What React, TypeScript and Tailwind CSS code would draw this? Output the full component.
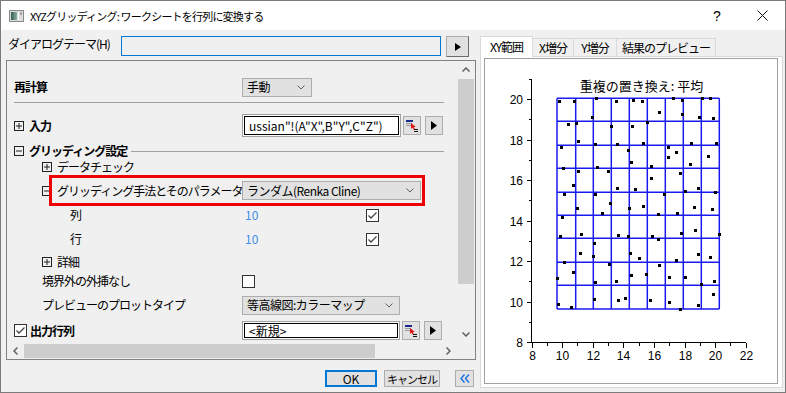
import React from "react";

const Chevron = () => (
  <svg width="8" height="5" viewBox="0 0 8 5" className="shrink-0">
    <polyline points="0.5,0.5 4,4 7.5,0.5" fill="none" stroke="#606060" strokeWidth="1" />
  </svg>
);

function Dropdown({ cls, text }: { cls: string; text: string }) {
  return (
    <div className={`${cls} h-[19px] border border-[#adadad] bg-[#e1e1e1] flex items-center pl-[4px] pr-[6px]`}>
      <span className="flex-1 whitespace-nowrap tracking-[-0.5px]">{text}</span>
      <Chevron />
    </div>
  );
}

function ExpandBox({ minus }: { minus?: boolean }) {
  return (
    <svg width="10" height="10" viewBox="0 0 10 10" className="shrink-0">
      <rect x="0.5" y="0.5" width="9" height="9" fill="none" stroke="#222" />
      <line x1="2" y1="5" x2="8" y2="5" stroke="#222" />
      {!minus && <line x1="5" y1="2" x2="5" y2="8" stroke="#222" />}
    </svg>
  );
}

function CheckBox({ checked }: { checked?: boolean }) {
  return (
    <div className="w-[13px] h-[13px] border border-[#333] bg-white shrink-0 flex items-center justify-center">
      {checked && (
        <svg width="11" height="11" viewBox="0 0 11 11">
          <polyline points="1.5,5.5 4,8 9.5,2.5" fill="none" stroke="#444" strokeWidth="1.3" />
        </svg>
      )}
    </div>
  );
}

function InputBox({ cls, text }: { cls: string; text: string }) {
  return (
    <div className={`${cls} border border-[#a0a0a0] bg-white p-px shrink-0`}>
      <div className="w-full h-full border border-black flex items-center pl-[4px] whitespace-nowrap tracking-normal text-[12px] leading-[12px]">
        {text}
      </div>
    </div>
  );
}

function PickBtn() {
  return (
    <div className="w-[18px] h-[19px] ml-[2px] border border-[#adadad] bg-[#e1e1e1] flex items-center justify-center shrink-0">
      <svg width="14" height="14" viewBox="0 0 14 14">
        <rect x="1" y="1" width="7" height="2" fill="#1a2a8a" />
        <rect x="1" y="4" width="6" height="1" fill="#9a9a9a" />
        <rect x="1" y="6" width="5" height="1" fill="#9a9a9a" />
        <polygon points="6,4 6,10 7.5,8.6 9,11 10.2,10.4 8.8,8 10.8,8" fill="#e01010" />
        <rect x="9" y="10" width="4" height="1" fill="#111" />
        <rect x="9" y="12" width="4" height="1" fill="#111" />
      </svg>
    </div>
  );
}

function ArrowBtn({ cls }: { cls: string }) {
  return (
    <div className={`${cls} border border-[#adadad] bg-[#e1e1e1] flex items-center justify-center shrink-0`}>
      <svg width="6" height="9" viewBox="0 0 6 9">
        <polygon points="0,0 6,4.5 0,9" fill="#000" />
      </svg>
    </div>
  );
}

const pts: [number, number][] = [
  [559, 101], [574, 101], [596, 98], [616, 101], [633, 100], [642, 101], [673, 98], [682, 100], [702, 98], [710, 98],
  [659, 112], [682, 114], [699, 117], [713, 118], [592, 117], [568, 124], [576, 123], [611, 126], [632, 126], [647, 122],
  [578, 141], [595, 144], [617, 144], [643, 143], [691, 143], [716, 143], [561, 147], [668, 147], [628, 150], [676, 152],
  [668, 157], [708, 156], [631, 162], [690, 164], [651, 166], [563, 168], [597, 167], [578, 171], [608, 171], [680, 173],
  [573, 185], [617, 188], [635, 189], [651, 178], [698, 188], [685, 191], [564, 194], [595, 194], [664, 194], [715, 192],
  [577, 208], [610, 203], [629, 208], [643, 206], [694, 207], [712, 209], [602, 213], [658, 214], [677, 213], [562, 217],
  [560, 236], [581, 234], [618, 235], [628, 236], [652, 236], [658, 239], [681, 233], [695, 230], [719, 234], [594, 243],
  [580, 253], [593, 256], [630, 253], [639, 258], [676, 260], [698, 254], [710, 257], [564, 262], [659, 265], [573, 272],
  [557, 278], [609, 264], [631, 275], [646, 274], [669, 277], [685, 277], [595, 282], [616, 281], [701, 284], [714, 281],
  [558, 304], [571, 307], [594, 299], [618, 300], [625, 298], [650, 300], [669, 302], [680, 309], [698, 305], [713, 294],
];

const vLines = [557, 575.7, 593.3, 611.3, 629.3, 647.3, 665.3, 683.3, 701.3, 719.3];
const hLines = [98.3, 121.3, 145.3, 168.3, 192.3, 215.3, 238.3, 262.3, 285.3, 309];

function Chart() {
  const yTicks = [];
  for (let v = 8; v <= 21; v++) {
    const y = Math.round(342 - (v - 8) * 20.25) + 0.5;
    const major = v % 2 === 0;
    yTicks.push(
      <g key={"y" + v}>
        <line x1={531.5 - (major ? 5 : 3)} y1={y} x2={531.5} y2={y} stroke="#000" />
        {major && (
          <text x={523} y={y + 4.5} textAnchor="end" fontSize="12" fontFamily="Liberation Sans, sans-serif">
            {v}
          </text>
        )}
      </g>
    );
  }
  const xTicks = [];
  for (let v = 8; v <= 22; v++) {
    const x = Math.round(531.5 + (v - 8) * 15.3) + 0.5;
    const major = v % 2 === 0;
    xTicks.push(
      <g key={"x" + v}>
        <line x1={x} y1={342.5} x2={x} y2={342.5 + (major ? 5 : 3)} stroke="#000" />
        {major && (
          <text x={x} y={360} textAnchor="middle" fontSize="12" fontFamily="Liberation Sans, sans-serif">
            {v}
          </text>
        )}
      </g>
    );
  }
  return (
    <svg width="292" height="324" viewBox="485 59 292 324" className="tracking-normal block">
      <text x={641.5} y={91} textAnchor="middle" fontSize="13" fontFamily="Noto Sans CJK JP, sans-serif">
        重複の置き換え: 平均
      </text>
      <g shapeRendering="crispEdges">
        <line x1={531.5} y1={79} x2={531.5} y2={343} stroke="#000" />
        <line x1={531} y1={342.5} x2={746} y2={342.5} stroke="#000" />
        {yTicks}
        {xTicks}
      </g>
      <g stroke="#1a1af0" strokeWidth="1.5">
        {vLines.map((x) => (
          <line key={"v" + x} x1={x} y1={98.3} x2={x} y2={309} />
        ))}
        {hLines.map((y) => (
          <line key={"h" + y} x1={557} y1={y} x2={719.3} y2={y} />
        ))}
      </g>
      <g shapeRendering="crispEdges">
        {pts.map(([x, y], i) => (
          <rect key={i} x={x - 1.5} y={y - 1.5} width="3" height="3" fill="#000" />
        ))}
      </g>
    </svg>
  );
}

export default function App() {
  return (
    <div className="w-[786px] h-[393px] overflow-hidden border border-[#7a7a7a] bg-[#f0f0f0] flex flex-col font-['Noto_Sans_CJK_JP',sans-serif] text-[12px] leading-[14px] text-black tracking-[-1px]">
      {/* Title bar */}
      <div className="h-[29px] bg-white flex items-center shrink-0">
        <div className="ml-[8px] w-[15px] h-[12px]">
          <svg width="15" height="12" viewBox="0 0 15 12">
            <defs>
              <linearGradient id="g1" x1="0" y1="0" x2="1" y2="0">
                <stop offset="0" stopColor="#2f5e52" />
                <stop offset="1" stopColor="#8fb0a4" />
              </linearGradient>
            </defs>
            <rect x="0.5" y="0.5" width="14" height="11" fill="#dcdcdc" stroke="#8a8a8a" />
            <rect x="2" y="2" width="6" height="8" fill="url(#g1)" />
            <rect x="9" y="2" width="1" height="8" fill="#ffffff" />
            <rect x="11" y="2" width="2" height="3" fill="#a8a8a8" />
          </svg>
        </div>
        <div className="ml-[6px] whitespace-nowrap text-[11px] tracking-[-0.8px]">XYZグリッディング: ワークシートを行列に変換する</div>
        <div className="flex-1" />
        <div className="w-[46px] flex items-center justify-center font-['Liberation_Sans',sans-serif] text-[14px] tracking-normal">?</div>
        <div className="w-[45px] flex items-center justify-center">
          <svg width="11" height="11" viewBox="0 0 11 11">
            <line x1="0.5" y1="0.5" x2="10.5" y2="10.5" stroke="#111" />
            <line x1="10.5" y1="0.5" x2="0.5" y2="10.5" stroke="#111" />
          </svg>
        </div>
      </div>

      {/* Body */}
      <div className="flex flex-1 pl-[5px]">
        {/* Left column */}
        <div className="w-[470px] flex flex-col">
          <div className="mt-[6px] h-[20px] flex items-start">
            <div className="w-[115px] pl-[2px] pt-[1px] whitespace-nowrap">ダイアログテーマ(H)</div>
            <div className="w-[320px] h-[20px] border border-[#0078d7] bg-[#f0f0f0]" />
            <div className="ml-[5px] w-[23px] h-[21px] border border-[#adadad] border-r-[#6d6d6d] border-b-[#6d6d6d] bg-[#e1e1e1] flex items-center justify-center">
              <svg width="6" height="8" viewBox="0 0 6 8">
                <polygon points="0,0 6,4 0,8" fill="#000" />
              </svg>
            </div>
          </div>

          {/* Panel */}
          <div className="mt-[4px] h-[300px] border border-[#828282] flex flex-col">
            <div className="flex h-[282px]">
              <div className="w-[450px] h-full overflow-hidden flex flex-col pt-[15px]">
                {/* 再計算 */}
                <div className="h-[22px] flex items-center shrink-0">
                  <div className="w-[235px] pl-[7px] font-bold">再計算</div>
                  <Dropdown cls="w-[70px]" text="手動" />
                </div>
                <div className="mt-[4px] ml-[7px] w-[430px] h-px bg-[#a0a0a0] shrink-0" />
                {/* 入力 */}
                <div className="mt-[11px] h-[23px] flex items-center shrink-0">
                  <div className="w-[235px] pl-[7px] flex items-center gap-[5px] font-bold">
                    <ExpandBox />
                    <span>入力</span>
                  </div>
                  <InputBox cls="w-[159px] h-[23px]" text={'ussian"!(A"X",B"Y",C"Z")'} />
                  <PickBtn />
                  <ArrowBtn cls="w-[18px] h-[19px] ml-[4px]" />
                </div>
                {/* グリッディング設定 */}
                <div className="mt-[6px] h-[16px] flex items-center shrink-0 pl-[7px] pr-[13px]">
                  <ExpandBox minus />
                  <span className="ml-[5px] font-bold whitespace-nowrap">グリッディング設定</span>
                  <div className="ml-[4px] flex-1 h-px bg-[#a0a0a0]" />
                </div>
                {/* データチェック */}
                <div className="h-[16px] flex items-center shrink-0 pl-[35px] gap-[5px]">
                  <ExpandBox />
                  <span>データチェック</span>
                </div>
                {/* 手法 */}
                <div className="relative h-[31px] flex items-center shrink-0">
                  <div className="w-[235px] pl-[35px] flex items-center gap-[5px] whitespace-nowrap">
                    <ExpandBox minus />
                    <span>グリッディング手法とそのパラメータ</span>
                  </div>
                  <Dropdown cls="w-[179px]" text="ランダム(Renka Cline)" />
                  <div className="absolute left-[42px] top-0 w-[376px] h-[31px] border-[3px] border-[#ee0000]" />
                </div>
                {/* 列 */}
                <div className="h-[18px] flex items-center shrink-0">
                  <div className="w-[235px] pl-[63px]">列</div>
                  <div className="w-[124px] pl-[3px] text-[#3d8fe8] tracking-normal">10</div>
                  <CheckBox checked />
                </div>
                {/* 行 */}
                <div className="h-[30px] flex items-center shrink-0">
                  <div className="w-[235px] pl-[63px]">行</div>
                  <div className="w-[124px] pl-[3px] text-[#3d8fe8] tracking-normal">10</div>
                  <CheckBox checked />
                </div>
                {/* 詳細 */}
                <div className="h-[16px] flex items-center shrink-0 pl-[35px] gap-[5px]">
                  <ExpandBox />
                  <span>詳細</span>
                </div>
                {/* 境界外 */}
                <div className="h-[22px] flex items-center shrink-0">
                  <div className="w-[235px] pl-[35px]">境界外の外挿なし</div>
                  <CheckBox />
                </div>
                {/* プレビュー */}
                <div className="h-[26px] flex items-center shrink-0">
                  <div className="w-[235px] pl-[35px] whitespace-nowrap">プレビューのプロットタイプ</div>
                  <Dropdown cls="w-[158px]" text="等高線図:カラーマップ" />
                </div>
                {/* 出力行列 */}
                <div className="h-[25px] flex items-center shrink-0">
                  <div className="w-[235px] pl-[7px] flex items-center gap-[3px] font-bold">
                    <CheckBox checked />
                    <span>出力行列</span>
                  </div>
                  <InputBox cls="w-[158px] h-[19px]" text="<新規>" />
                  <PickBtn />
                  <ArrowBtn cls="w-[18px] h-[19px] ml-[4px]" />
                </div>
              </div>
              {/* vertical scrollbar */}
              <div className="w-[18px] h-full flex flex-col">
                <div className="h-[17px] flex items-center justify-center">
                  <svg width="8" height="5" viewBox="0 0 8 5">
                    <polyline points="0.5,4.5 4,1 7.5,4.5" fill="none" stroke="#606060" strokeWidth="1.5" />
                  </svg>
                </div>
                <div className="mt-[1px] mx-[1px] h-[205px] bg-[#cdcdcd]" />
                <div className="flex-1" />
                <div className="h-[17px] flex items-center justify-center">
                  <svg width="8" height="5" viewBox="0 0 8 5">
                    <polyline points="0.5,0.5 4,4 7.5,0.5" fill="none" stroke="#606060" strokeWidth="1.5" />
                  </svg>
                </div>
              </div>
            </div>
            {/* horizontal scrollbar */}
            <div className="h-[16px] flex">
              <div className="w-[17px] flex items-center justify-center">
                <svg width="5" height="8" viewBox="0 0 5 8">
                  <polyline points="4.5,0.5 1,4 4.5,7.5" fill="none" stroke="#606060" strokeWidth="1.5" />
                </svg>
              </div>
              <div className="w-[351px] my-[1px] bg-[#cdcdcd]" />
              <div className="flex-1" />
              <div className="w-[17px] flex items-center justify-center">
                <svg width="5" height="8" viewBox="0 0 5 8">
                  <polyline points="0.5,0.5 4,4 0.5,7.5" fill="none" stroke="#606060" strokeWidth="1.5" />
                </svg>
              </div>
              <div className="w-[18px]" />
            </div>
          </div>

          {/* Buttons */}
          <div className="mt-[10px] h-[17px] flex justify-end pr-[2px] tracking-normal">
            <div className="w-[52px] h-[17px] border-2 border-[#0078d7] bg-[#e1e1e1] flex items-center justify-center">OK</div>
            <div className="ml-[7px] w-[56px] h-[17px] border border-[#adadad] bg-[#e1e1e1] flex items-center justify-center whitespace-nowrap text-[11px] tracking-[-1px]">キャンセル</div>
            <div className="ml-[15px] w-[19px] h-[17px] border border-[#adadad] bg-[#e1e1e1] flex items-center justify-center">
              <svg width="10" height="9" viewBox="0 0 10 9">
                <polyline points="4.5,0.5 1,4.5 4.5,8.5" fill="none" stroke="#1a6fe0" strokeWidth="1.4" />
                <polyline points="9,0.5 5.5,4.5 9,8.5" fill="none" stroke="#1a6fe0" strokeWidth="1.4" />
              </svg>
            </div>
          </div>
        </div>

        {/* Right column */}
        <div className="ml-[4px] w-[303px] flex flex-col">
          <div className="mt-[6px] h-[20px] flex items-end">
            <div className="relative z-10 -mb-px h-[21px] w-[53px] bg-white border border-b-0 border-[#d9d9d9] flex items-center justify-center whitespace-nowrap">XY範囲</div>
            <div className="h-[18px] w-[41px] border-t border-r border-[#d9d9d9] bg-[#f0f0f0] flex items-center justify-center whitespace-nowrap">X増分</div>
            <div className="h-[18px] w-[43px] border-t border-r border-[#d9d9d9] bg-[#f0f0f0] flex items-center justify-center whitespace-nowrap">Y増分</div>
            <div className="h-[18px] w-[99px] border-t border-r border-[#d9d9d9] bg-[#f0f0f0] flex items-center justify-center whitespace-nowrap">結果のプレビュー</div>
          </div>
          <div className="h-[332px] border border-[#d9d9d9] bg-white pt-[1px] px-[3px]">
            <div className="w-[294px] h-[326px] border border-[#a0a0a0] bg-white">
              <Chart />
            </div>
          </div>
        </div>
      </div>
    </div>
  );
}
